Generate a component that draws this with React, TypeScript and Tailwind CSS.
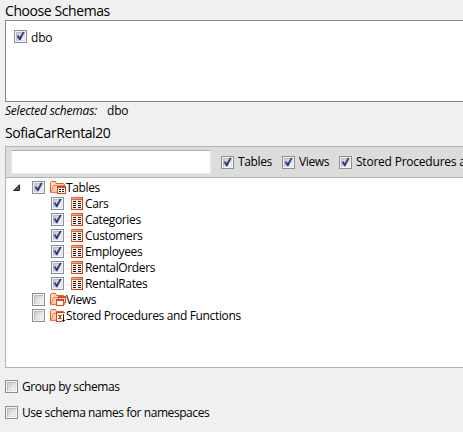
import React from 'react';

function Check({ on = false, className = 'mb-px' }: { on?: boolean; className?: string }) {
  return (
    <svg width="13" height="13" viewBox="0 0 13 13" className={`block shrink-0 ${className}`}>
      <defs>
        <linearGradient id="well" x1="0" y1="0" x2="1" y2="1">
          <stop offset="0" stopColor="#c3c8d2" />
          <stop offset="1" stopColor="#fafafa" />
        </linearGradient>
      </defs>
      <rect width="13" height="13" fill="#8e8f8f" />
      <rect x="1" y="1" width="11" height="11" fill="#f4f4f4" />
      <rect x="2" y="2" width="9" height="9" fill="#b9bec6" />
      <rect x="3" y="3" width="8" height="8" fill="#dfe1e5" />
      <rect x="3" y="3" width="7" height="7" fill="url(#well)" />
      {on && <path d="M3 6.2 L4.4 5.4 L5.7 7.4 L8.9 2 L10.3 2.3 L6.4 10 L5.2 10 Z" fill="#2b3581" stroke="#2b3581" strokeWidth=".4" />}
    </svg>
  );
}

function TableIcon() {
  return (
    <svg width="12" height="13" viewBox="0 0 12 13" className="mb-px block shrink-0" shapeRendering="crispEdges">
      <defs>
        <linearGradient id="frame" x1="0" y1="0" x2="1" y2="1">
          <stop offset="0" stopColor="#ff7a45" />
          <stop offset="1" stopColor="#c92c08" />
        </linearGradient>
      </defs>
      <rect width="12" height="13" fill="url(#frame)" />
      <rect x="1" y="1" width="10" height="1" fill="#ff9a68" />
      <rect x="1" y="3" width="10" height="9" fill="#fff1e6" />
      {[4, 6, 8, 10].map((y) => (
        <g key={y} fill="#1a1a1a">
          <rect x="2" y={y} width="3" height="1" />
          <rect x="7" y={y} width="3" height="1" />
        </g>
      ))}
    </svg>
  );
}

function FolderIcon({ kind }: { kind: 'table' | 'view' | 'proc' }) {
  return (
    <svg width="16" height="14" viewBox="0 0 16 14" className="block shrink-0">
      <defs>
        <linearGradient id="folder" x1="0" y1="0" x2="1" y2="1">
          <stop offset="0" stopColor="#fff0e2" />
          <stop offset="1" stopColor="#ffa878" />
        </linearGradient>
      </defs>
      <path d="M.5 11.5V1.5L1.5.5H5.5L6.5 2.5H13.5L14.5 3.5V11.5Z" fill="#ffd9bd" stroke="#f4561f" />
      <path d="M1 11.5L3.5 4.5H14.5V11.5Z" fill="url(#folder)" stroke="#f4713a" strokeWidth=".9" />
      {kind === 'table' && (
        <g shapeRendering="crispEdges">
          <rect x="7" y="5" width="9" height="8" fill="#dc3e12" />
          <rect x="8" y="7" width="7" height="5" fill="#fff" />
          <path d="M9 8h2v1H9zM12 8h2v1h-2zM9 10h2v1H9zM12 10h2v1h-2z" fill="#222" />
        </g>
      )}
      {kind === 'view' && (
        <g shapeRendering="crispEdges">
          <rect x="8" y="3" width="8" height="7" fill="#e8481c" />
          <rect x="9" y="5" width="6" height="4" fill="#ffe8d8" />
          <rect x="6" y="6" width="8" height="7" fill="#e8481c" />
          <rect x="7" y="8" width="6" height="4" fill="#fff" />
        </g>
      )}
      {kind === 'proc' && (
        <g shapeRendering="crispEdges">
          <rect x="6" y="3" width="10" height="11" fill="#fff" />
          <path d="M6 3h9v1H7v9H6zM7 12h5v1H7z" fill="#dc3e12" />
          <path d="M8 6h4v1H8zM9 7h2v2H9zM8 9h4v1H8z" fill="#e8481c" />
          <path d="M13 5h1v8h-1zM12 11h3v1h-3z" fill="#222" />
        </g>
      )}
    </svg>
  );
}

const tables = ['Cars', 'Categories', 'Customers', 'Employees', 'RentalOrders', 'RentalRates'];

export default function App() {
  return (
    <div className="flex h-[432px] w-[463px] flex-col overflow-hidden bg-[#f0f0f0] pl-[5px] font-['Open_Sans','Noto_Sans',sans-serif] text-[12px] leading-4 tracking-[-0.36px] whitespace-nowrap text-black">
      <div className="h-5 shrink-0 pt-px text-[14px] leading-5 tracking-[-0.42px]">Choose Schemas</div>
      <div className="h-[82px] shrink-0 border border-r-0 border-[#828790] bg-white pt-[9px] pl-2">
        <div className="flex items-center gap-1 tracking-[-0.2px]">
          <Check on className="mb-[3px]" />
          <span>dbo</span>
        </div>
      </div>
      <div className="flex h-[22px] shrink-0 gap-[10px] pt-px tracking-[-0.2px]">
        <span className="italic">Selected schemas:</span>
        <span>dbo</span>
      </div>
      <div className="h-[22px] shrink-0 text-[14px] leading-[18px] tracking-[-0.4px]">SofiaCarRental20</div>
      <div className="flex h-[222px] shrink-0 flex-col border border-r-0 border-[#b4b4b4] bg-white">
        <div className="flex h-[31px] shrink-0 items-center border-b border-[#b4b4b4] bg-[#dcdcdc] pl-[5px]">
          <div className="h-6 w-[200px] shrink-0 border border-[#e3e9ef] border-t-[#abadb3] bg-white" />
          <div className="ml-[10px] flex w-[61px] shrink-0 items-center gap-1"><Check on className="mt-px" /><span>Tables</span></div>
          <div className="flex w-[57px] shrink-0 items-center gap-1"><Check on className="mt-px" /><span>Views</span></div>
          <div className="flex shrink-0 items-center gap-1 tracking-[-0.22px]"><Check on className="mt-px" /><span>Stored Procedures and Functions</span></div>
        </div>
        <div className="flex flex-col pt-[2px]">
          <div className="flex h-4 items-center pl-[7px]">
            <svg width="7" height="7" viewBox="0 0 7 7" className="mr-3 mb-px block"><path d="M6.5 .7V6.5H.7Z" fill="#595959" stroke="#262626" /></svg>
            <Check on />
            <span className="ml-[5px]"><FolderIcon kind="table" /></span>
            <span>Tables</span>
          </div>
          {tables.map((name) => (
            <div key={name} className="flex h-4 items-center pl-[45px]">
              <Check on />
              <span className="mr-[2px] ml-[7px]"><TableIcon /></span>
              <span>{name}</span>
            </div>
          ))}
          <div className="flex h-4 items-center pl-[26px]">
            <Check />
            <span className="ml-[5px]"><FolderIcon kind="view" /></span>
            <span>Views</span>
          </div>
          <div className="flex h-4 items-center pl-[26px]">
            <Check />
            <span className="ml-[5px]"><FolderIcon kind="proc" /></span>
            <span>Stored Procedures and Functions</span>
          </div>
        </div>
      </div>
      <div className="mt-[11px] flex h-4 shrink-0 items-center gap-1 tracking-[-0.42px]"><Check /><span>Group by schemas</span></div>
      <div className="mt-[10px] flex h-4 shrink-0 items-center gap-1 tracking-[-0.43px]"><Check /><span>Use schema names for namespaces</span></div>
    </div>
  );
}
